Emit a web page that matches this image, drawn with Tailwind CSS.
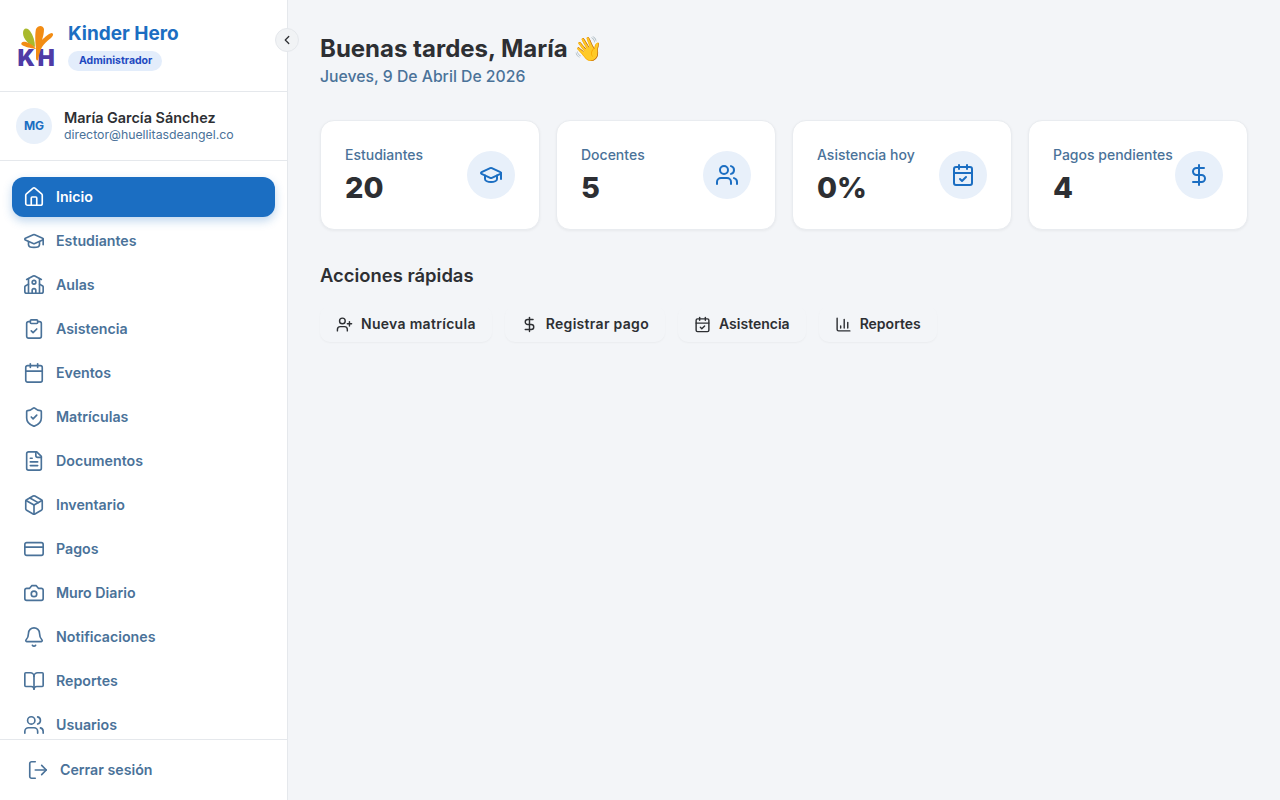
<!DOCTYPE html>
<html lang="es">
<head>
    <meta charset="UTF-8">
    <meta name="viewport" content="width=device-width, initial-scale=1.0">
    <title>Kinder Hero</title>
    <script src="https://cdn.jsdelivr.net/npm/@tailwindcss/browser@4"></script>
</head>
<body class="bg-[#f3f5f8] font-['Inter',sans-serif] text-[#2d2f33] h-[800px] overflow-hidden">
<div class="flex h-[800px]">

    <!-- Sidebar -->
    <aside class="relative w-[288px] shrink-0 bg-white border-r border-[#e5e8ec] flex flex-col h-full">
        <!-- Brand -->
        <div class="h-[92px] shrink-0 border-b border-[#e5e8ec] flex items-start pl-[16px] pt-[22px]">
            <svg class="w-[40px] h-[46px] mt-[3px] shrink-0" viewBox="0 0 40 46">
                <text x="1.5" y="41" font-size="23" font-weight="900" fill="#4f3ba6" font-family="Inter, sans-serif">K</text>
                <text x="21.5" y="41" font-size="23" font-weight="900" fill="#4f3ba6" font-family="Inter, sans-serif">H</text>
                <path d="M19 22 C13 20 7 14 7 8 C7 3 11 2 14 6 C17 10 19 16 19 22Z" fill="#a9b92c"/>
                <path d="M19 24 C15 23 9 22 6 20 C4 18 7 16 10 17 C14 18 17 20 20 24Z" fill="#f28c13"/>
                <path d="M20 24 C19 16 19 8 20 4 C22 0 27 0 28 4 C28 8 27 12 26 15 C29 12 33 8 36 8 C38 9 37 11 35 13 C31 16 28 19 26 22 C24 26 23 30 22 35 C21 36 20 35 20 33Z" fill="#f28c13"/>
            </svg>
            <div class="ml-[12px]">
                <div class="text-[19px] leading-[24px] font-bold text-[#1b6ec2]">Kinder Hero</div>
                <span class="inline-block mt-[5px] h-[20px] leading-[20px] pl-[11px] pr-[10px] rounded-full bg-[#e3edfb] text-[10.5px] font-bold text-[#2148c0]">Administrador</span>
            </div>
        </div>

        <button class="absolute left-[275px] top-[28px] w-[24px] h-[24px] rounded-full bg-[#f1f3f5] border border-[#e5e8ec] flex items-center justify-center z-10">
            <svg class="w-[14px] h-[14px]" viewBox="0 0 24 24" fill="none" stroke="#2d2f33" stroke-width="2.2" stroke-linecap="round" stroke-linejoin="round"><path d="m15 18-6-6 6-6"/></svg>
        </button>

        <!-- User -->
        <div class="h-[69px] shrink-0 border-b border-[#e5e8ec] flex items-center pl-[16px]">
            <div class="w-[36px] h-[36px] rounded-full bg-[#e8f0fa] flex items-center justify-center text-[12px] font-bold text-[#1b6ec2]">MG</div>
            <div class="ml-[12px]">
                <div class="text-[14.4px] leading-[18px] font-semibold text-[#2d2f33]">María García Sánchez</div>
                <div class="text-[12.3px] leading-[16px] text-[#4a7299]">director@huellitasdeangel.co</div>
            </div>
        </div>

        <!-- Nav -->
        <nav class="flex-1 overflow-hidden px-[12px] pt-[16px] flex flex-col gap-[4px] text-[14.2px] font-semibold text-[#4a7299]">
            <a class="h-[40px] shrink-0 flex items-center gap-[11px] pl-[11px] rounded-[12px] bg-[#1b6ec2] text-white shadow-[0_4px_10px_rgba(27,110,194,0.28)]">
                <svg class="w-[22px] h-[22px] shrink-0" viewBox="0 0 24 24" fill="none" stroke="currentColor" stroke-width="1.8" stroke-linecap="round" stroke-linejoin="round"><path d="M15 21v-8a1 1 0 0 0-1-1h-4a1 1 0 0 0-1 1v8"/><path d="M3 10a2 2 0 0 1 .709-1.528l7-5.999a2 2 0 0 1 2.582 0l7 5.999A2 2 0 0 1 21 10v9a2 2 0 0 1-2 2H5a2 2 0 0 1-2-2z"/></svg>
                <span class="pb-[1px]">Inicio</span>
            </a>
            <a class="h-[40px] shrink-0 flex items-center gap-[11px] pl-[11px]">
                <svg class="w-[22px] h-[22px] shrink-0" viewBox="0 0 24 24" fill="none" stroke="currentColor" stroke-width="1.8" stroke-linecap="round" stroke-linejoin="round"><path d="M21.42 10.922a1 1 0 0 0-.019-1.838L12.83 5.18a2 2 0 0 0-1.66 0L2.6 9.08a1 1 0 0 0 0 1.832l8.57 3.908a2 2 0 0 0 1.66 0z"/><path d="M22 10v6"/><path d="M6 12.5V16a6 3 0 0 0 12 0v-3.5"/></svg>
                <span class="pb-[1px]">Estudiantes</span>
            </a>
            <a class="h-[40px] shrink-0 flex items-center gap-[11px] pl-[11px]">
                <svg class="w-[22px] h-[22px] shrink-0" viewBox="0 0 24 24" fill="none" stroke="currentColor" stroke-width="1.8" stroke-linecap="round" stroke-linejoin="round"><path d="M14 21v-3a2 2 0 0 0-4 0v3"/><path d="M18 5v16"/><path d="m4 6 7.106-3.79a2 2 0 0 1 1.788 0L20 6"/><path d="m6 11-3.52 2.147a1 1 0 0 0-.48.854V19a2 2 0 0 0 2 2h16a2 2 0 0 0 2-2v-5a1 1 0 0 0-.48-.853L18 11"/><path d="M6 5v16"/><circle cx="12" cy="9" r="2"/></svg>
                <span class="pb-[1px]">Aulas</span>
            </a>
            <a class="h-[40px] shrink-0 flex items-center gap-[11px] pl-[11px]">
                <svg class="w-[22px] h-[22px] shrink-0" viewBox="0 0 24 24" fill="none" stroke="currentColor" stroke-width="1.8" stroke-linecap="round" stroke-linejoin="round"><rect x="8" y="2" width="8" height="4" rx="1"/><path d="M16 4h2a2 2 0 0 1 2 2v14a2 2 0 0 1-2 2H6a2 2 0 0 1-2-2V6a2 2 0 0 1 2-2h2"/><path d="m9 14 2 2 4-4"/></svg>
                <span class="pb-[1px]">Asistencia</span>
            </a>
            <a class="h-[40px] shrink-0 flex items-center gap-[11px] pl-[11px]">
                <svg class="w-[22px] h-[22px] shrink-0" viewBox="0 0 24 24" fill="none" stroke="currentColor" stroke-width="1.8" stroke-linecap="round" stroke-linejoin="round"><path d="M8 2v4"/><path d="M16 2v4"/><rect x="3" y="4" width="18" height="18" rx="2"/><path d="M3 10h18"/></svg>
                <span class="pb-[1px]">Eventos</span>
            </a>
            <a class="h-[40px] shrink-0 flex items-center gap-[11px] pl-[11px]">
                <svg class="w-[22px] h-[22px] shrink-0" viewBox="0 0 24 24" fill="none" stroke="currentColor" stroke-width="1.8" stroke-linecap="round" stroke-linejoin="round"><path d="M20 13c0 5-3.5 7.5-7.66 8.95a1 1 0 0 1-.67-.01C7.5 20.5 4 18 4 13V6a1 1 0 0 1 1-1c2 0 4.5-1.2 6.24-2.72a1.17 1.17 0 0 1 1.52 0C14.51 3.81 17 5 19 5a1 1 0 0 1 1 1z"/><path d="m9 12 2 2 4-4"/></svg>
                <span class="pb-[1px]">Matrículas</span>
            </a>
            <a class="h-[40px] shrink-0 flex items-center gap-[11px] pl-[11px]">
                <svg class="w-[22px] h-[22px] shrink-0" viewBox="0 0 24 24" fill="none" stroke="currentColor" stroke-width="1.8" stroke-linecap="round" stroke-linejoin="round"><path d="M15 2H6a2 2 0 0 0-2 2v16a2 2 0 0 0 2 2h12a2 2 0 0 0 2-2V7Z"/><path d="M14 2v4a2 2 0 0 0 2 2h4"/><path d="M10 9H8"/><path d="M16 13H8"/><path d="M16 17H8"/></svg>
                <span class="pb-[1px]">Documentos</span>
            </a>
            <a class="h-[40px] shrink-0 flex items-center gap-[11px] pl-[11px]">
                <svg class="w-[22px] h-[22px] shrink-0" viewBox="0 0 24 24" fill="none" stroke="currentColor" stroke-width="1.8" stroke-linecap="round" stroke-linejoin="round"><path d="m7.5 4.27 9 5.15"/><path d="M21 8a2 2 0 0 0-1-1.73l-7-4a2 2 0 0 0-2 0l-7 4A2 2 0 0 0 3 8v8a2 2 0 0 0 1 1.73l7 4a2 2 0 0 0 2 0l7-4A2 2 0 0 0 21 16Z"/><path d="m3.3 7 8.7 5 8.7-5"/><path d="M12 22V12"/></svg>
                <span class="pb-[1px]">Inventario</span>
            </a>
            <a class="h-[40px] shrink-0 flex items-center gap-[11px] pl-[11px]">
                <svg class="w-[22px] h-[22px] shrink-0" viewBox="0 0 24 24" fill="none" stroke="currentColor" stroke-width="1.8" stroke-linecap="round" stroke-linejoin="round"><rect x="2" y="5" width="20" height="14" rx="2"/><path d="M2 10h20"/></svg>
                <span class="pb-[1px]">Pagos</span>
            </a>
            <a class="h-[40px] shrink-0 flex items-center gap-[11px] pl-[11px]">
                <svg class="w-[22px] h-[22px] shrink-0" viewBox="0 0 24 24" fill="none" stroke="currentColor" stroke-width="1.8" stroke-linecap="round" stroke-linejoin="round"><path d="M14.5 4h-5L7 7H4a2 2 0 0 0-2 2v9a2 2 0 0 0 2 2h16a2 2 0 0 0 2-2V9a2 2 0 0 0-2-2h-3l-2.5-3z"/><circle cx="12" cy="13" r="3"/></svg>
                <span class="pb-[1px]">Muro Diario</span>
            </a>
            <a class="h-[40px] shrink-0 flex items-center gap-[11px] pl-[11px]">
                <svg class="w-[22px] h-[22px] shrink-0" viewBox="0 0 24 24" fill="none" stroke="currentColor" stroke-width="1.8" stroke-linecap="round" stroke-linejoin="round"><path d="M10.268 21a2 2 0 0 0 3.464 0"/><path d="M3.262 15.326A1 1 0 0 0 4 17h16a1 1 0 0 0 .74-1.673C19.41 13.956 18 12.499 18 8A6 6 0 0 0 6 8c0 4.499-1.411 5.956-2.738 7.326"/></svg>
                <span class="pb-[1px]">Notificaciones</span>
            </a>
            <a class="h-[40px] shrink-0 flex items-center gap-[11px] pl-[11px]">
                <svg class="w-[22px] h-[22px] shrink-0" viewBox="0 0 24 24" fill="none" stroke="currentColor" stroke-width="1.8" stroke-linecap="round" stroke-linejoin="round"><path d="M12 7v14"/><path d="M3 18a1 1 0 0 1-1-1V4a1 1 0 0 1 1-1h5a4 4 0 0 1 4 4 4 4 0 0 1 4-4h5a1 1 0 0 1 1 1v13a1 1 0 0 1-1 1h-6a3 3 0 0 0-3 3 3 3 0 0 0-3-3z"/></svg>
                <span class="pb-[1px]">Reportes</span>
            </a>
            <a class="h-[40px] shrink-0 flex items-center gap-[11px] pl-[11px]">
                <svg class="w-[22px] h-[22px] shrink-0" viewBox="0 0 24 24" fill="none" stroke="currentColor" stroke-width="1.8" stroke-linecap="round" stroke-linejoin="round"><path d="M16 21v-2a4 4 0 0 0-4-4H6a4 4 0 0 0-4 4v2"/><circle cx="9" cy="7" r="4"/><path d="M22 21v-2a4 4 0 0 0-3-3.87"/><path d="M16 3.13a4 4 0 0 1 0 7.75"/></svg>
                <span class="pb-[1px]">Usuarios</span>
            </a>
        </nav>

        <!-- Logout -->
        <div class="h-[61px] shrink-0 border-t border-[#e5e8ec] flex items-center pl-[27px] gap-[11px] text-[14.2px] font-semibold text-[#4a7299]">
            <svg class="w-[22px] h-[22px] shrink-0" viewBox="0 0 24 24" fill="none" stroke="currentColor" stroke-width="1.8" stroke-linecap="round" stroke-linejoin="round"><path d="M9 21H5a2 2 0 0 1-2-2V5a2 2 0 0 1 2-2h4"/><path d="m16 17 5-5-5-5"/><path d="M21 12H9"/></svg>
            <span class="pb-[1px]">Cerrar sesión</span>
        </div>
    </aside>

    <!-- Main -->
    <main class="flex-1 px-[32px] pt-[33px]">
        <h1 class="text-[24px] leading-[32px] font-bold text-[#2d2f33]">Buenas tardes, María 👋</h1>
        <p class="text-[15.75px] leading-[24px] font-medium text-[#4a7299]">Jueves, 9 De Abril De 2026</p>

        <div class="grid grid-cols-4 gap-[16px] mt-[31px]">
            <div class="h-[110px] rounded-[14px] bg-white border border-[#e9ecf0] shadow-[0_1px_3px_rgba(0,0,0,0.05)] flex items-start justify-between pl-[24px] pr-[24px] pt-[24px]">
                <div>
                    <div class="text-[14px] leading-[20px] font-medium text-[#4a7299]">Estudiantes</div>
                    <div class="text-[29px] leading-[36px] mt-[5px] font-extrabold text-[#2d2f33]">20</div>
                </div>
                <div class="w-[48px] h-[48px] mt-[6px] rounded-full bg-[#e8f0fa] flex items-center justify-center text-[#1b6ec2]">
                    <svg class="w-[24px] h-[24px]" viewBox="0 0 24 24" fill="none" stroke="currentColor" stroke-width="2" stroke-linecap="round" stroke-linejoin="round"><path d="M21.42 10.922a1 1 0 0 0-.019-1.838L12.83 5.18a2 2 0 0 0-1.66 0L2.6 9.08a1 1 0 0 0 0 1.832l8.57 3.908a2 2 0 0 0 1.66 0z"/><path d="M22 10v6"/><path d="M6 12.5V16a6 3 0 0 0 12 0v-3.5"/></svg>
                </div>
            </div>
            <div class="h-[110px] rounded-[14px] bg-white border border-[#e9ecf0] shadow-[0_1px_3px_rgba(0,0,0,0.05)] flex items-start justify-between pl-[24px] pr-[24px] pt-[24px]">
                <div>
                    <div class="text-[14px] leading-[20px] font-medium text-[#4a7299]">Docentes</div>
                    <div class="text-[29px] leading-[36px] mt-[5px] font-extrabold text-[#2d2f33]">5</div>
                </div>
                <div class="w-[48px] h-[48px] mt-[6px] rounded-full bg-[#e8f0fa] flex items-center justify-center text-[#1b6ec2]">
                    <svg class="w-[24px] h-[24px]" viewBox="0 0 24 24" fill="none" stroke="currentColor" stroke-width="2" stroke-linecap="round" stroke-linejoin="round"><path d="M16 21v-2a4 4 0 0 0-4-4H6a4 4 0 0 0-4 4v2"/><circle cx="9" cy="7" r="4"/><path d="M22 21v-2a4 4 0 0 0-3-3.87"/><path d="M16 3.13a4 4 0 0 1 0 7.75"/></svg>
                </div>
            </div>
            <div class="h-[110px] rounded-[14px] bg-white border border-[#e9ecf0] shadow-[0_1px_3px_rgba(0,0,0,0.05)] flex items-start justify-between pl-[24px] pr-[24px] pt-[24px]">
                <div>
                    <div class="text-[14px] leading-[20px] font-medium text-[#4a7299]">Asistencia hoy</div>
                    <div class="text-[29px] leading-[36px] mt-[5px] font-extrabold text-[#2d2f33]">0%</div>
                </div>
                <div class="w-[48px] h-[48px] mt-[6px] rounded-full bg-[#e8f0fa] flex items-center justify-center text-[#1b6ec2]">
                    <svg class="w-[24px] h-[24px]" viewBox="0 0 24 24" fill="none" stroke="currentColor" stroke-width="2" stroke-linecap="round" stroke-linejoin="round"><path d="M8 2v4"/><path d="M16 2v4"/><rect x="3" y="4" width="18" height="18" rx="2"/><path d="M3 10h18"/><path d="m9 16 2 2 4-4"/></svg>
                </div>
            </div>
            <div class="h-[110px] rounded-[14px] bg-white border border-[#e9ecf0] shadow-[0_1px_3px_rgba(0,0,0,0.05)] flex items-start justify-between pl-[24px] pr-[24px] pt-[24px]">
                <div>
                    <div class="text-[14px] leading-[20px] font-medium text-[#4a7299]">Pagos pendientes</div>
                    <div class="text-[29px] leading-[36px] mt-[5px] font-extrabold text-[#2d2f33]">4</div>
                </div>
                <div class="w-[48px] h-[48px] mt-[6px] rounded-full bg-[#e8f0fa] flex items-center justify-center text-[#1b6ec2]">
                    <svg class="w-[24px] h-[24px]" viewBox="0 0 24 24" fill="none" stroke="currentColor" stroke-width="2" stroke-linecap="round" stroke-linejoin="round"><path d="M12 2v20"/><path d="M17 5H9.5a3.5 3.5 0 0 0 0 7h5a3.5 3.5 0 0 1 0 7H6"/></svg>
                </div>
            </div>
        </div>

        <h2 class="text-[18.4px] leading-[28px] mt-[31px] font-semibold text-[#2d2f33]">Acciones rápidas</h2>

        <div class="flex gap-[13px] mt-[17px] text-[14px] font-semibold text-[#2d2f33]">
            <button class="h-[36px] px-[16px] rounded-[10px] flex items-center gap-[8px] shadow-[0_1px_2px_rgba(0,0,0,0.04)]">
                <svg class="w-[17px] h-[17px]" viewBox="0 0 24 24" fill="none" stroke="currentColor" stroke-width="2" stroke-linecap="round" stroke-linejoin="round"><path d="M16 21v-2a4 4 0 0 0-4-4H6a4 4 0 0 0-4 4v2"/><circle cx="9" cy="7" r="4"/><path d="M19 8v6"/><path d="M22 11h-6"/></svg>
                <span class="pb-[2px] tracking-[0.3px]">Nueva matrícula</span>
            </button>
            <button class="h-[36px] px-[16px] rounded-[10px] flex items-center gap-[8px] shadow-[0_1px_2px_rgba(0,0,0,0.04)]">
                <svg class="w-[17px] h-[17px]" viewBox="0 0 24 24" fill="none" stroke="currentColor" stroke-width="2" stroke-linecap="round" stroke-linejoin="round"><path d="M12 2v20"/><path d="M17 5H9.5a3.5 3.5 0 0 0 0 7h5a3.5 3.5 0 0 1 0 7H6"/></svg>
                <span class="pb-[2px] tracking-[0.3px]">Registrar pago</span>
            </button>
            <button class="h-[36px] px-[16px] rounded-[10px] flex items-center gap-[8px] shadow-[0_1px_2px_rgba(0,0,0,0.04)]">
                <svg class="w-[17px] h-[17px]" viewBox="0 0 24 24" fill="none" stroke="currentColor" stroke-width="2" stroke-linecap="round" stroke-linejoin="round"><path d="M8 2v4"/><path d="M16 2v4"/><rect x="3" y="4" width="18" height="18" rx="2"/><path d="M3 10h18"/><path d="m9 16 2 2 4-4"/></svg>
                <span class="pb-[2px]">Asistencia</span>
            </button>
            <button class="h-[36px] px-[16px] rounded-[10px] flex items-center gap-[8px] shadow-[0_1px_2px_rgba(0,0,0,0.04)]">
                <svg class="w-[17px] h-[17px]" viewBox="0 0 24 24" fill="none" stroke="currentColor" stroke-width="2" stroke-linecap="round" stroke-linejoin="round"><path d="M3 3v16a2 2 0 0 0 2 2h16"/><path d="M18 17V9"/><path d="M13 17V5"/><path d="M8 17v-3"/></svg>
                <span class="pb-[2px]">Reportes</span>
            </button>
        </div>
    </main>
</div>
</body>
</html>
